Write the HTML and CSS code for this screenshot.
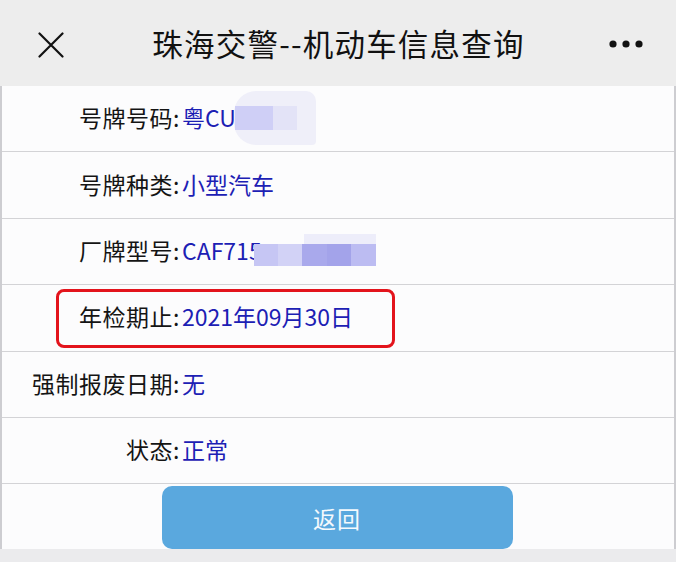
FILE: index.html
```html
<!DOCTYPE html>
<html lang="zh-CN">
<head>
<meta charset="utf-8">
<title>珠海交警--机动车信息查询</title>
<link rel="stylesheet" href="styles.css">
</head>
<body>
<div class="page">
  <header class="nav">
    <svg class="nav-close" width="26" height="26" viewBox="0 0 26 26" aria-hidden="true">
      <path d="M1.5 1.5 L24.5 24.5 M24.5 1.5 L1.5 24.5" stroke="#111" stroke-width="2.2" fill="none" stroke-linecap="round"/>
    </svg>
    <h1 class="nav-title">珠海交警--机动车信息查询</h1>
    <svg class="nav-more" width="34" height="8" viewBox="0 0 34 8" aria-hidden="true">
      <circle cx="4" cy="4" r="3.6" fill="#111"/>
      <circle cx="17" cy="4" r="3.6" fill="#111"/>
      <circle cx="30" cy="4" r="3.6" fill="#111"/>
    </svg>
  </header>

  <main class="list">
    <div class="row">
      <span class="label">号牌号码:</span>
      <span class="value">粤CU<span class="mask-plate"><span class="mp-a"></span><span class="mp-b"></span></span></span>
    </div>
    <div class="row">
      <span class="label">号牌种类:</span>
      <span class="value">小型汽车</span>
    </div>
    <div class="row">
      <span class="label">厂牌型号:</span>
      <span class="value">CAF715<span class="mask-model"><span class="mm c1"></span><span class="mm c2"></span><span class="mm c3"></span><span class="mm c4"></span><span class="mm c5"></span></span></span>
    </div>
    <div class="row row-marked">
      <span class="label">年检期止:</span>
      <span class="value">2021年09月30日</span>
      <span class="highlight"></span>
    </div>
    <div class="row">
      <span class="label">强制报废日期:</span>
      <span class="value">无</span>
    </div>
    <div class="row">
      <span class="label">状态:</span>
      <span class="value">正常</span>
    </div>
  </main>

  <div class="actions">
    <button class="btn-back" type="button">返回</button>
  </div>
  <div class="bottom-band"></div>
</div>
</body>
</html>
```
FILE: styles.css
```css
* { box-sizing: border-box; }

html, body {
  margin: 0;
  padding: 0;
  background: #fcfcfd;
}

body {
  font-family: "Noto Sans CJK SC", "Noto Sans", sans-serif;
  color: #151515;
}

.page {
  width: 676px;
  height: 562px;
  display: flex;
  flex-direction: column;
  overflow: hidden;
}

.nav {
  height: 86px;
  background: #ededed;
  display: flex;
  align-items: center;
  padding: 0 33px 0 38px;
}

.nav-close {
  flex: none;
  margin-top: 4px;
}

.nav-title {
  flex: 1;
  margin: 0;
  padding-left: 4px;
  text-align: center;
  font-size: 30.5px;
  font-weight: 400;
  letter-spacing: 1.2px;
  color: #111;
  line-height: 1;
}

.nav-more {
  flex: none;
  margin-top: 2px;
}

.list {
  display: grid;
  grid-template-rows: repeat(6, 66.4px);
  border-left: 2px solid #cdcdd1;
  border-right: 2px solid #cdcdd1;
  background: #fcfcfd;
}

.row {
  position: relative;
  display: grid;
  grid-template-columns: 178px 1fr;
  align-items: center;
  border-bottom: 1px solid #d3d3d6;
  font-size: 23px;
  line-height: 1;
  padding-bottom: 2px;
}

.label {
  text-align: right;
  white-space: nowrap;
  letter-spacing: 0.5px;
  color: #141414;
}

.value {
  padding-left: 2px;
  white-space: nowrap;
  color: #1c20b4;
  display: flex;
  align-items: center;
}

.mask-plate {
  display: inline-flex;
  align-items: center;
  width: 82px;
  height: 54px;
  margin-left: -2px;
  padding-left: 1px;
  background: #efeff9;
  border-radius: 22px 10px 4px 22px;
}

.mp-a {
  width: 38px;
  height: 24px;
  background: #cfcff6;
}

.mp-b {
  width: 24px;
  height: 24px;
  background: #e3e3f7;
}

.mask-model {
  display: inline-grid;
  grid-template-columns: repeat(5, 24.4px);
  height: 32px;
  margin-left: -8px;
  padding-top: 10px;
  background: linear-gradient(to right, transparent 0 50px, #ededfa 50px 100%) top / 100% 10px no-repeat;
}

.mm { height: 22px; }
.c1 { background: #c6c6f4; }
.c2 { background: #d2d2f6; }
.c3 { background: #a9a9ec; }
.c4 { background: #a3a3ea; }
.c5 { background: #bcbcf2; }

.highlight {
  position: absolute;
  left: 54px;
  top: 4px;
  width: 339px;
  height: 59px;
  border: 3.5px solid #e3141c;
  border-radius: 8px;
  pointer-events: none;
}

.actions {
  flex: 1;
  display: flex;
  justify-content: center;
  align-items: flex-end;
  border-left: 2px solid #cdcdd1;
  border-right: 2px solid #cdcdd1;
  background: #fcfcfd;
}

.btn-back {
  width: 351px;
  height: 63px;
  margin-left: -2px;
  border: none;
  border-radius: 10px;
  background: #5aa8de;
  color: #f4f9fd;
  font-family: "Noto Sans CJK SC", "Noto Sans", sans-serif;
  font-size: 23px;
  letter-spacing: 1px;
}

.bottom-band {
  height: 13px;
  background: #ebebed;
}
```
